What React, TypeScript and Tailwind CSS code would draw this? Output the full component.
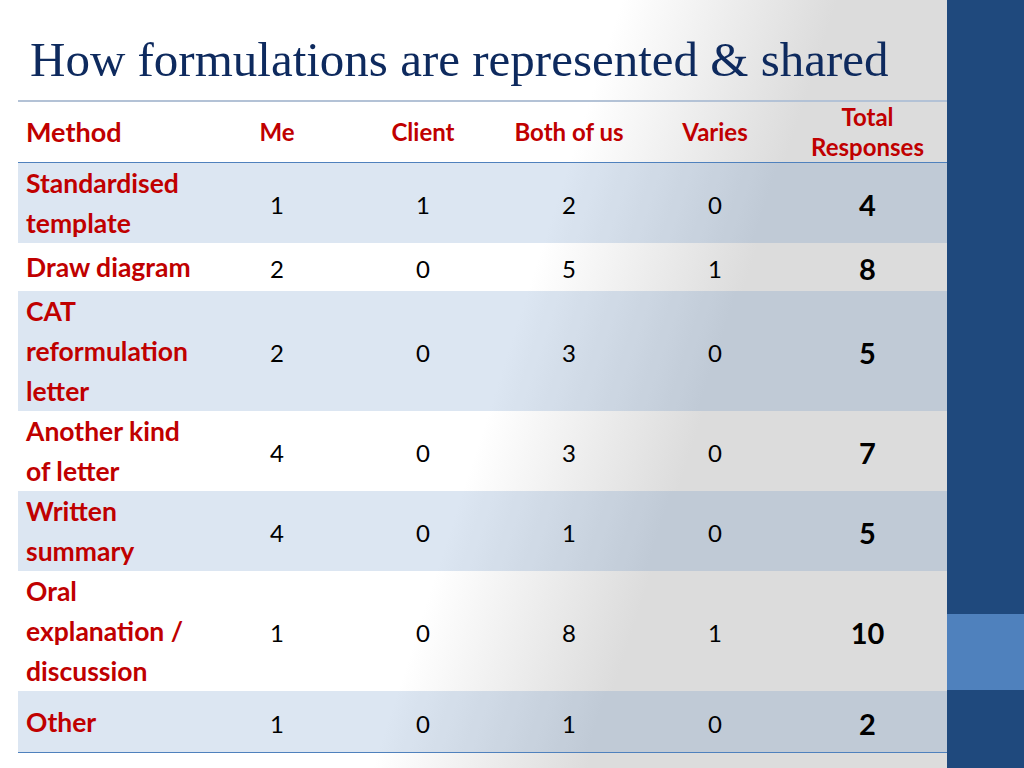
const rows = [
  { method: ['Standardised', 'template'], me: 1, client: 1, both: 2, varies: 0, total: 4, h: 'h-[80px]', tint: true },
  { method: ['Draw diagram'], me: 2, client: 0, both: 5, varies: 1, total: 8, h: 'h-[48px]', tint: false },
  { method: ['CAT', 'reformulation', 'letter'], me: 2, client: 0, both: 3, varies: 0, total: 5, h: 'h-[120px]', tint: true },
  { method: ['Another kind', 'of letter'], me: 4, client: 0, both: 3, varies: 0, total: 7, h: 'h-[80px]', tint: false },
  { method: ['Written', 'summary'], me: 4, client: 0, both: 1, varies: 0, total: 5, h: 'h-[80px]', tint: true },
  { method: ['Oral', 'explanation /', 'discussion'], me: 1, client: 0, both: 8, varies: 1, total: 10, h: 'h-[120px]', tint: false },
  { method: ['Other'], me: 1, client: 0, both: 1, varies: 0, total: 2, h: 'h-[62px]', tint: true },
];

const cols = 'grid grid-cols-[186px_146px_146px_146px_146px_159px]';

export default function App() {
  return (
    <div className="flex h-[768px] w-[1024px] overflow-hidden font-['Lato',sans-serif]">
      <div className="flex w-[947px] flex-col bg-[linear-gradient(108deg,#ffffff_52%,#dcdcdc_70%)] pl-[18px]">
        <h1 className="h-[100px] pl-[12px] pt-[35px] font-['Liberation_Serif',serif] text-[49px] leading-none text-[#0e2a5e]">
          How formulations are represented &amp; shared
        </h1>

        <div className="border-t-2 border-[#b3c2d6]">
          <div className={`${cols} h-[61px] items-center border-b border-[#4f81bd] text-[24px] font-bold text-[#c00000]`}>
            <div className="pl-2 text-[27px]">Method</div>
            <div className="text-center">Me</div>
            <div className="text-center">Client</div>
            <div className="text-center">Both of us</div>
            <div className="text-center">Varies</div>
            <div className="text-center leading-[30px]">
              Total
              <br />
              Responses
            </div>
          </div>

          {rows.map((r, i) => (
            <div
              key={i}
              className={`${cols} ${r.h} items-center ${r.tint ? 'bg-[rgba(79,129,189,0.2)]' : ''} ${i === rows.length - 1 ? 'border-b border-[#4f81bd]' : ''}`}
            >
              <div className="pl-2 text-[26.5px] font-bold leading-[40px] text-[#c00000]">
                {r.method.map((m) => (
                  <div key={m}>{m}</div>
                ))}
              </div>
              <div className="pt-1 text-center text-[24px] text-black">{r.me}</div>
              <div className="pt-1 text-center text-[24px] text-black">{r.client}</div>
              <div className="pt-1 text-center text-[24px] text-black">{r.both}</div>
              <div className="pt-1 text-center text-[24px] text-black">{r.varies}</div>
              <div className="pt-1 text-center text-[29px] font-bold text-black">{r.total}</div>
            </div>
          ))}
        </div>
      </div>

      <div className="flex w-[77px] flex-col">
        <div className="h-[614px] bg-[#1f497d]" />
        <div className="h-[76px] bg-[#4f81bd]" />
        <div className="flex-1 bg-[#1f497d]" />
      </div>
    </div>
  );
}
